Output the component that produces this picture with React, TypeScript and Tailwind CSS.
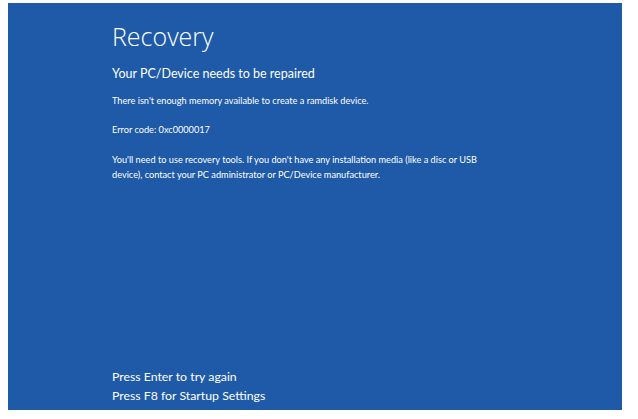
export default function App() {
  return (
    <div className="w-[638px] h-[419px] bg-white pt-[3px] pl-[8px] font-['Lato',sans-serif]">
      <div className="w-[614px] h-[407px] bg-[#1e5aa8] text-white flex flex-col pl-[104px] pt-[18px] pb-[5px]">
        <h1 className="text-[25px] font-light leading-[30px] font-['Open_Sans',sans-serif]">Recovery</h1>
        <h2 className="text-[12.5px] leading-[18px] mt-[14px]">Your PC/Device needs to be repaired</h2>
        <p className="text-[9.2px] leading-[15px] mt-[10px]">
          There isn't enough memory available to create a ramdisk device.
        </p>
        <p className="text-[9.2px] leading-[15px] mt-[14px]">Error code: 0xc0000017</p>
        <p className="text-[9.2px] leading-[15px] mt-[15px] w-[376px]">
          You'll need to use recovery tools. If you don't have any installation media (like a disc or USB
          device), contact your PC administrator or PC/Device manufacturer.
        </p>
        <div className="mt-auto text-[12.3px] leading-[19px]">
          <p>Press Enter to try again</p>
          <p>Press F8 for Startup Settings</p>
        </div>
      </div>
    </div>
  );
}
